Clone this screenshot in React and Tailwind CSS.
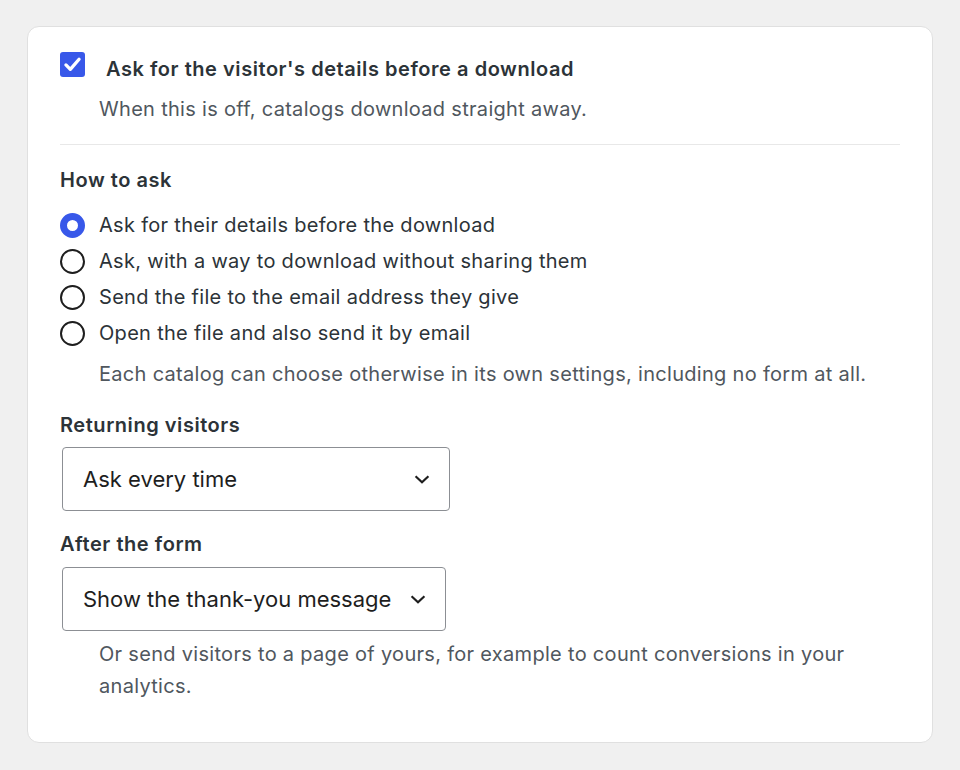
const Radio = ({ checked, label }) => {
  return (
    <label className="flex items-center h-9 gap-[14px]">
      {checked ? (
        <span className="w-[25px] h-[25px] rounded-full border-[7px] border-[#3858e9] bg-white shrink-0" />
      ) : (
        <span className="w-[25px] h-[25px] rounded-full border-2 border-[#1e1e1e] bg-white shrink-0" />
      )}
      <span className="text-[20px] leading-8 tracking-[0.3px] text-[#2c3338]">{label}</span>
    </label>
  );
};

const Select = ({ value, width }) => {
  return (
    <div
      className={`flex items-center justify-between h-[64px] border border-[#8c8f94] rounded-[4px] bg-white pl-[20px] pr-[16px] ${width}`}
    >
      <span className="text-[22px] text-[#1e1e1e]">{value}</span>
      <svg width="22" height="22" viewBox="0 0 24 24" fill="none">
        <path d="M5 9l7 6.5L19 9" stroke="#1e1e1e" strokeWidth="2.4" />
      </svg>
    </div>
  );
};

export default function App() {
  return (
    <div className="min-h-screen bg-[#f0f0f0] pt-[26px] px-[27px] font-['Inter','Liberation_Sans',sans-serif]">
      <div className="bg-white border border-[#e0e0e0] rounded-xl pt-[26px] px-8 pb-10">
        <div className="flex items-start">
          <span className="w-[25px] h-[25px] rounded-[3px] bg-[#3858e9] flex items-center justify-center shrink-0 -mt-[1px]">
            <svg width="21" height="21" viewBox="0 0 24 24" fill="none">
              <path d="M4.5 12.5l5 5L19.5 6" stroke="white" strokeWidth="3.8" strokeLinecap="round" strokeLinejoin="round" />
            </svg>
          </span>
          <h2 className="ml-[21px] text-[20px] leading-8 font-semibold tracking-[0.55px] text-[#2c3338]">
            Ask for the visitor's details before a download
          </h2>
        </div>
        <p className="mt-2 pl-[39px] text-[20px] leading-8 tracking-[0.3px] text-[#50575e]">
          When this is off, catalogs download straight away.
        </p>

        <div className="mt-[19px] h-px bg-[#e8e8e8]" />

        <h3 className="mt-[19px] text-[20px] leading-8 font-semibold tracking-[0.55px] text-[#2c3338]">How to ask</h3>
        <div className="mt-[11px] flex flex-col">
          <Radio checked label="Ask for their details before the download" />
          <Radio label="Ask, with a way to download without sharing them" />
          <Radio label="Send the file to the email address they give" />
          <Radio label="Open the file and also send it by email" />
        </div>
        <p className="mt-[7px] pl-[39px] text-[20px] leading-8 tracking-[0.3px] text-[#50575e]">
          Each catalog can choose otherwise in its own settings, including no form at all.
        </p>

        <h3 className="mt-[19px] text-[20px] leading-8 font-semibold tracking-[0.55px] text-[#2c3338]">Returning visitors</h3>
        <div className="mt-[6px] pl-[2px]">
          <Select value="Ask every time" width="w-[388px]" />
        </div>

        <h3 className="mt-[17px] text-[20px] leading-8 font-semibold tracking-[0.55px] text-[#2c3338]">After the form</h3>
        <div className="mt-[7px] pl-[2px]">
          <Select value="Show the thank-you message" width="w-[384px]" />
        </div>
        <p className="mt-[7px] pl-[39px] text-[20px] leading-8 tracking-[0.3px] text-[#50575e]">
          Or send visitors to a page of yours, for example to count conversions in your analytics.
        </p>
      </div>
    </div>
  );
}
